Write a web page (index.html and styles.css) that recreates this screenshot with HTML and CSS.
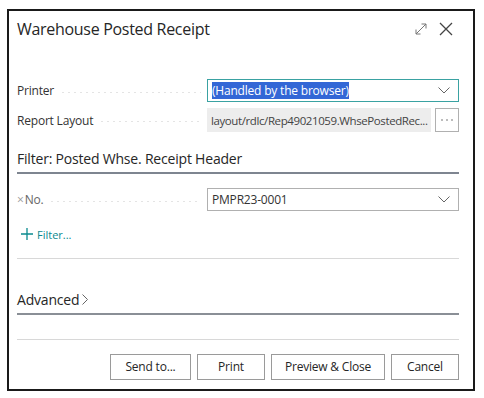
FILE: index.html
```html
<html>
<head>
<meta charset="utf-8">
<title>Warehouse Posted Receipt</title>
<link rel="stylesheet" href="styles.css">
</head>
<body>
	<div id="dialog">

		<div id="dlg-head">
			<div class="dlg-title">Warehouse Posted Receipt</div>
			<div class="dlg-icons">
				<svg width="12" height="12" viewBox="0 0 12 12"><path d="M1 11 L11 1 M6.5 1 H11 V5.5 M1 6.5 V11 H5.5" fill="none" stroke="#777" stroke-width="1"/></svg>
				<svg width="14" height="14" viewBox="0 0 14 14"><path d="M1 1 L13 13 M13 1 L1 13" fill="none" stroke="#444" stroke-width="1.3"/></svg>
			</div>
		</div>

		<div id="dlg-body">
			<div class="row" id="printer-row">
				<div class="lbl"><span>Printer</span><i class="dots"></i></div>
				<div class="field sel active">
					<span class="hl">(Handled by the browser)</span>
					<svg class="chev" width="12" height="7" viewBox="0 0 12 7"><path d="M0.5 0.5 L6 6 L11.5 0.5" fill="none" stroke="#666" stroke-width="1"/></svg>
				</div>
			</div>
			<div class="row" id="layout-row">
				<div class="lbl"><span>Report Layout</span><i class="dots"></i></div>
				<div class="field ro"><span class="clip">layout/rdlc/Rep49021059.WhsePostedRec...</span></div>
				<div class="more">
					<svg width="12" height="2" viewBox="0 0 12 2"><circle cx="1" cy="1" r="0.8" fill="#666"/><circle cx="6" cy="1" r="0.8" fill="#666"/><circle cx="11" cy="1" r="0.8" fill="#666"/></svg>
				</div>
			</div>

			<div class="group">Filter: Posted Whse. Receipt Header</div>

			<div class="row" id="no-row">
				<div class="lbl"><span class="muted"><b class="x">&times;</b>No.</span><i class="dots"></i></div>
				<div class="field sel">
					<span>PMPR23-0001</span>
					<svg class="chev" width="12" height="7" viewBox="0 0 12 7"><path d="M0.5 0.5 L6 6 L11.5 0.5" fill="none" stroke="#666" stroke-width="1"/></svg>
				</div>
			</div>
			<div class="add-filter">
				<svg width="12" height="12" viewBox="0 0 12 12"><path d="M6 0 V12 M0 6 H12" stroke="#0a8a8f" stroke-width="1.3"/></svg>
				<span>Filter...</span>
			</div>
			<div class="sep" id="sep1"></div>

			<div class="group" id="advanced">Advanced<svg width="6" height="11" viewBox="0 0 6 11"><path d="M0.5 0.5 L5.5 5.5 L0.5 10.5" fill="none" stroke="#666" stroke-width="1"/></svg></div>
			<div class="sep" id="sep2"></div>

			<div id="dlg-btns">
				<div class="btn" id="send-btn">Send to...</div>
				<div class="btn" id="print-btn">Print</div>
				<div class="btn" id="preview-btn">Preview &amp; Close</div>
				<div class="btn" id="cancel-btn">Cancel</div>
			</div>
		</div>

	</div>
</body>
</html>
```

FILE: styles.css
```css
html,body{
	margin: 0px;
	padding: 0px;
}

body{
	background-color: #FFF;
	font-family: "Open Sans", "Noto Sans", sans-serif;
	color: #333;
}

#dialog{
	box-sizing: border-box;
	margin: 9px 0px 0px 7px;
	width: 468px;
	height: 382px;
	border: 2px solid #1A1A1A;
	background-color: #FFF;
}

#dlg-head{
	display: flex;
	align-items: center;
	justify-content: space-between;
	height: 36px;
	padding: 0px 20px 0px 8px;
}

.dlg-title{
	font-size: 16px;
	color: #262626;
	letter-spacing: -0.3px;
}

.dlg-icons{
	display: flex;
	align-items: center;
	gap: 12px;
}

#dlg-body{
	padding: 32px 14px 0px 8px;
}

.row{
	display: flex;
	align-items: center;
}

.lbl{
	display: flex;
	align-items: center;
	width: 190px;
	flex-shrink: 0;
	font-size: 12px;
	letter-spacing: -0.2px;
	color: #333;
}

.lbl span{
	white-space: nowrap;
	padding-right: 6px;
}

.dots{
	flex: 1;
	height: 1px;
	margin: 3px 6px 0px 0px;
	background-image: radial-gradient(circle, #C4C4C4 0.6px, transparent 0.8px);
	background-size: 6px 2px;
	background-repeat: repeat-x;
}

.field{
	box-sizing: border-box;
	flex: 1;
	min-width: 0;
	display: flex;
	align-items: center;
	font-size: 12px;
	letter-spacing: -0.2px;
	color: #333;
	white-space: nowrap;
	overflow: hidden;
}

.sel{
	height: 23px;
	border: 1px solid #B0B0B0;
	padding: 0px 8px 0px 4px;
	justify-content: space-between;
}

.sel.active{
	border: 1px solid #3AA2A2;
}

.hl{
	background-color: #3367D6;
	color: #FFF;
}

.ro{
	height: 24px;
	background-color: #EDEDED;
	padding: 0px 2px 0px 4px;
}

.clip{
	font-size: 11.5px;
	letter-spacing: -0.4px;
	color: #444;
}

.more{
	box-sizing: border-box;
	display: flex;
	align-items: center;
	justify-content: center;
	flex-shrink: 0;
	width: 24px;
	height: 24px;
	margin-left: 4px;
	border: 1px solid #B0B0B0;
}

#printer-row{
	margin-bottom: 6px;
}

.group{
	display: flex;
	align-items: center;
	gap: 3px;
	font-size: 14px;
	color: #262626;
	letter-spacing: -0.2px;
	height: 27px;
	margin-top: 13px;
	border-bottom: 2px solid #7E8590;
}

#no-row{
	margin-top: 14px;
}

.muted{
	color: #666;
}

.x{
	font-weight: normal;
	color: #999;
	margin-right: 1px;
}

.add-filter{
	display: flex;
	align-items: center;
	gap: 4px;
	height: 24px;
	margin-top: 11px;
	padding-left: 4px;
	font-size: 11px;
	color: #0A8A8F;
}

.sep{
	height: 1px;
	background-color: #D8D8D8;
}

#sep1{
	margin-top: 12px;
}

#advanced{
	margin-top: 27px;
	border-bottom-color: #8A8F96;
}

#sep2{
	margin-top: 24px;
}

#dlg-btns{
	display: flex;
	justify-content: flex-end;
	gap: 6px;
	margin-top: 14px;
}

.btn{
	box-sizing: border-box;
	height: 26px;
	border: 1px solid #9A9A9A;
	font-size: 12px;
	color: #262626;
	line-height: 24px;
	text-align: center;
	letter-spacing: -0.2px;
}

#send-btn{ width: 81px; }
#print-btn{ width: 68px; }
#preview-btn{ width: 114px; }
#cancel-btn{ width: 68px; }
```
